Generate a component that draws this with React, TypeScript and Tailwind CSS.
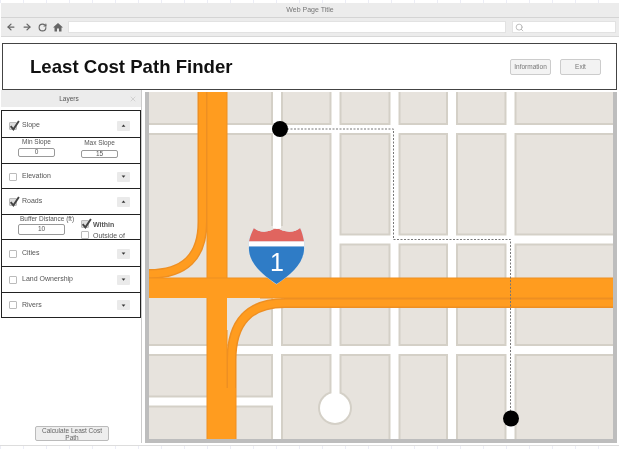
import { ArrowLeft, ArrowRight, RotateCw, Search, X } from "lucide-react";

function Check({ on }: { on?: boolean }) {
  return (
    <span className={`relative block h-[8px] w-[8px] shrink-0 rounded-[1px] border border-[#bbbbbb] ${on ? "bg-[#dddddd]" : "bg-white"}`}>
      {on && (
        <svg viewBox="0 0 10 10" className="absolute -left-[1px] -top-[3px] h-[11px] w-[11px]">
          <path d="M1.5 5.5 L4 8.5 L9 1" fill="none" stroke="#444444" strokeWidth="1.7" />
        </svg>
      )}
    </span>
  );
}

function Toggle({ up }: { up?: boolean }) {
  return (
    <span className="flex h-[10px] w-[13px] items-center justify-center rounded-[1px] bg-[#eaeaea]">
      <svg viewBox="0 0 6 4" className="h-[3px] w-[5px]">
        <path d={up ? "M0.5 3.5 L3 0.5 L5.5 3.5 Z" : "M0.5 0.5 L3 3.5 L5.5 0.5 Z"} fill="#333333" />
      </svg>
    </span>
  );
}

function LayerRow({ label, on, up, h }: { label: string; on?: boolean; up?: boolean; h: string }) {
  return (
    <div className={`flex items-center border-b border-[#222222] pl-[7px] pr-[10px] ${h}`}>
      <Check on={on} />
      <span className="ml-[5px] flex-1 text-[7px] text-[#555555]">{label}</span>
      <Toggle up={up} />
    </div>
  );
}

function SmallInput({ value, w }: { value: string; w: string }) {
  return (
    <div className={`flex items-center justify-center rounded-[2px] border border-[#999999] bg-white text-[6.5px] leading-none text-[#555555] ${w}`}>
      {value}
    </div>
  );
}

function MapDrawing() {
  const roads = [
    "M149 129 H613",
    "M339 239.5 H613",
    "M149 350 H613",
    "M149 401.5 H277",
    "M277 92 V439",
    "M335.5 92 V400",
    "M394.5 92 V439",
    "M452 92 V439",
    "M510.5 92 V439",
  ];
  return (
    <svg viewBox="149 92 464 347" className="block h-[347px] w-[464px]">
      <rect x="149" y="92" width="464" height="347" fill="#e7e3dd" />
      {roads.map((d) => (
        <path key={d} d={d} stroke="#d4d0c7" strokeWidth="12" fill="none" />
      ))}
      <circle cx="335" cy="408" r="17" fill="#d4d0c7" />
      {roads.map((d) => (
        <path key={d + "w"} d={d} stroke="#ffffff" strokeWidth="8" fill="none" />
      ))}
      <circle cx="335" cy="408" r="15" fill="#ffffff" />

      {/* upper ramp */}
      <path d="M202.5 92 V222 Q202.5 274 149 274" fill="none" stroke="#ee8f22" strokeWidth="10" />
      <path d="M202.5 92 V222 Q202.5 274 149 274" fill="none" stroke="#ff9c1f" strokeWidth="7" />
      {/* lower ramp */}
      <path d="M613 303 H285 Q231.5 303 231.5 360 V439" fill="none" stroke="#ee8f22" strokeWidth="10" />
      <path d="M613 303 H285 Q231.5 303 231.5 360 V439" fill="none" stroke="#ff9c1f" strokeWidth="7" />
      {/* main vertical */}
      <rect x="207" y="92" width="20" height="347" fill="#ff9c1f" />
      <rect x="206.5" y="92" width="1" height="347" fill="#ee8f22" />
      <rect x="226.5" y="92" width="1" height="186" fill="#ee8f22" />
      <rect x="226.5" y="330" width="1" height="58" fill="#ee8f22" />
      <rect x="227" y="388" width="8.5" height="51" fill="#ff9c1f" />
      {/* main horizontal */}
      <rect x="149" y="278" width="464" height="20" fill="#ff9c1f" />
      <rect x="149" y="277.5" width="464" height="1" fill="#ee8f22" />
      <rect x="260" y="297.5" width="353" height="1" fill="#ee8f22" />

      {/* route */}
      <path d="M280 129 H393.5 V239.5 H510.5 V418" fill="none" stroke="#777777" strokeWidth="1" strokeDasharray="2 1.5" />
      <circle cx="280" cy="129" r="8" fill="#000000" />
      <circle cx="511" cy="418.5" r="8" fill="#000000" />

      {/* interstate shield */}
      <path d="M248.5 247 C248 262 261 274 276.5 284.5 C292 274 305 262 304.5 247 L304.5 241 C303.5 236 302.5 232 300 227.5 L276.5 226.5 L254 227.5 C251.5 232 249.5 236 248.5 241 Z" fill="#cfe0ee" />
      <path d="M249 241.5 C250 236 252 232 254 228 C259 233 270 233 276.5 227 C283 233 295 233 300 228 C302 232 303 236 304 241.5 Z" fill="#e0655f" />
      <path d="M254 228 C259 233 270 233 276.5 227 C283 233 295 233 300 228 L300 226 H254 Z" fill="#e7e3dd" />
      <path d="M273 224 H281 V228 Q277 230 273 228 Z" fill="#ffffff" />
      <rect x="249" y="241.5" width="55" height="5" fill="#ffffff" />
      <path d="M249 246.5 H304 C305 262 292 274 276.5 284 C261 274 248 262 249 246.5 Z" fill="#2f7cc6" />
      <text x="277" y="271" textAnchor="middle" className="font-['Liberation_Sans',sans-serif] text-[25px]" fill="#ffffff">1</text>
    </svg>
  );
}

export default function App() {
  return (
    <div className="flex h-[449px] w-[619px] flex-col overflow-hidden bg-white font-['Liberation_Sans',sans-serif] blur-[0.3px]">
      <div className="h-[3px] shrink-0 bg-[repeating-linear-gradient(90deg,#ecedf6_0,#ecedf6_1px,transparent_1px,transparent_23px)]" />
      {/* browser chrome */}
      <div className="ml-[1px] flex h-[15px] shrink-0 items-center justify-center border-b border-[#d4d4d4] bg-[#ececec] text-[7px] text-[#777777]">
        Web Page Title
      </div>
      <div className="ml-[1px] flex h-[19px] shrink-0 items-center border-b border-[#d8d8d8] bg-[#ececec] pl-[5px] pr-[3px]">
        <div className="flex w-[62px] items-center gap-[6px] text-[#666666]">
          <ArrowLeft size={10} strokeWidth={3} />
          <ArrowRight size={10} strokeWidth={3} />
          <RotateCw size={9} strokeWidth={3} />
          <svg viewBox="0 0 10 10" className="h-[10px] w-[10px]">
            <path d="M5 1 L10 5.5 H8.5 V9.5 H6 V6.5 H4 V9.5 H1.5 V5.5 H0 Z" fill="#666666" />
          </svg>
        </div>
        <div className="h-[12px] w-[438px] border border-[#e2e2e2] bg-white" />
        <div className="ml-[6px] flex h-[12px] flex-1 items-center border border-[#e2e2e2] bg-white pl-[2px] text-[#aaaaaa]">
          <Search size={9} strokeWidth={2} />
        </div>
      </div>

      {/* app header */}
      <div className="mx-[2px] mt-[6px] flex h-[47px] shrink-0 items-center border border-[#444444] bg-white pl-[27px] pr-[15px]">
        <h1 className="mt-[1px] flex-1 text-[18.6px] font-bold leading-none text-[#111111]">Least Cost Path Finder</h1>
        <button className="h-[16px] w-[41px] rounded-[2px] border border-[#cccccc] bg-[#f3f3f3] text-[6.5px] text-[#777777]">Information</button>
        <button className="ml-[9px] h-[16px] w-[41px] rounded-[2px] border border-[#cccccc] bg-[#f3f3f3] text-[6.5px] text-[#777777]">Exit</button>
      </div>

      {/* body */}
      <div className="flex h-[353px] shrink-0">
        {/* layers panel */}
        <aside className="ml-[1px] flex h-[353px] w-[141px] flex-col border-r border-[#cccccc] bg-white">
          <div className="flex h-[17px] shrink-0 items-center bg-[#ececec] pl-[8px] pr-[4px] text-[6.5px] text-[#555555]">
            <span className="flex-1 text-center">Layers</span>
            <X size={8} strokeWidth={2} className="text-[#c4c4c4]" />
          </div>
          <div className="mt-[3px] border-x border-t border-[#222222]">
            <LayerRow label="Slope" on up h="h-[27px] pt-[3px]" />
            <div className="flex h-[26px] items-start border-b border-[#222222] pl-[16px] text-[6.5px] leading-[8px] text-[#555555]">
              <div className="flex w-[37px] flex-col items-center gap-[2px]">
                <span className="whitespace-nowrap">Min Slope</span>
                <SmallInput value="0" w="h-[9px] w-[37px]" />
              </div>
              <div className="ml-[26px] mt-[1px] flex w-[37px] flex-col items-center gap-[3px]">
                <span className="whitespace-nowrap">Max Slope</span>
                <SmallInput value="15" w="h-[8px] w-[37px]" />
              </div>
            </div>
            <LayerRow label="Elevation" h="h-[25px] pt-[1px]" />
            <LayerRow label="Roads" on up h="h-[26px]" />
            <div className="flex h-[25px] items-start border-b border-[#222222] pl-[16px] text-[6.5px] leading-[7px] text-[#555555]">
              <div className="flex w-[47px] flex-col items-start gap-[2px]">
                <span className="ml-[2px] whitespace-nowrap">Buffer Distance (ft)</span>
                <SmallInput value="10" w="h-[11px] w-[47px]" />
              </div>
              <div className="ml-[16px] mt-[5px] flex flex-col gap-[3px] text-[7px]">
                <div className="flex items-center gap-[4px]">
                  <Check on />
                  <span className="font-bold">Within</span>
                </div>
                <div className="flex items-center gap-[4px]">
                  <Check />
                  <span>Outside of</span>
                </div>
              </div>
            </div>
            <LayerRow label="Cities" h="h-[27px] pt-[1px]" />
            <LayerRow label="Land Ownership" h="h-[26px]" />
            <LayerRow label="Rivers" h="h-[25px]" />
          </div>
          <div className="mb-[2px] mt-auto flex justify-center pl-[2px]">
            <button className="h-[15px] w-[74px] rounded-[2px] border border-[#bbbbbb] bg-[#eeeeee] text-[6.5px] leading-[7px] text-[#666666]">
              Calculate Least Cost Path
            </button>
          </div>
        </aside>

        {/* map */}
        <div className="ml-[3px] mt-[2px] h-[351px] w-[472px] border-x-4 border-b-4 border-[#bdbdbd] bg-white">
          <MapDrawing />
        </div>
      </div>

      <div className="mt-[2px] flex-1 border-t border-[#dddddd] bg-[repeating-linear-gradient(90deg,#ecedf6_0,#ecedf6_1px,transparent_1px,transparent_23px)]" />
    </div>
  );
}
